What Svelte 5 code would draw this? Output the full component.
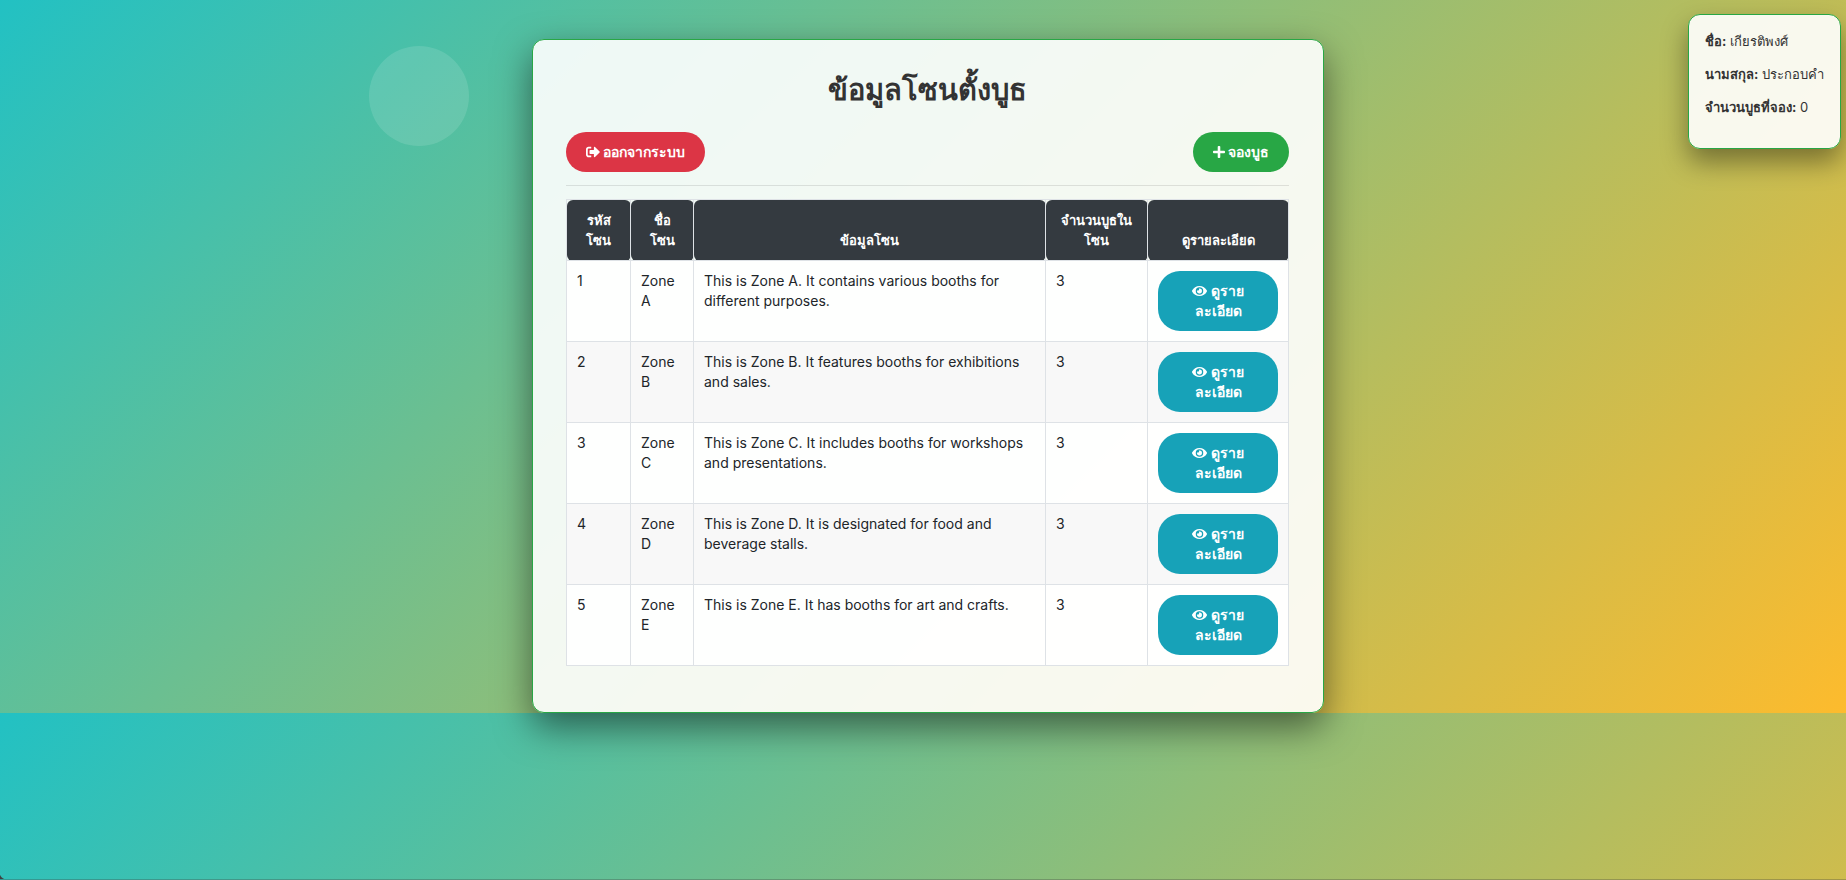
<script>
  const user = { first: 'เกียรติพงศ์', last: 'ประกอบคำ', booked: 0 };
  const zones = [
    { id: 1, name: 'Zone A', info: 'This is Zone A. It contains various booths for different purposes.', booths: 3 },
    { id: 2, name: 'Zone B', info: 'This is Zone B. It features booths for exhibitions and sales.', booths: 3 },
    { id: 3, name: 'Zone C', info: 'This is Zone C. It includes booths for workshops and presentations.', booths: 3 },
    { id: 4, name: 'Zone D', info: 'This is Zone D. It is designated for food and beverage stalls.', booths: 3 },
    { id: 5, name: 'Zone E', info: 'This is Zone E. It has booths for art and crafts.', booths: 3 }
  ];
</script>

<div class="page">
  <div class="stage">
    <div class="bubble" aria-hidden="true"></div>

    <aside class="profile">
      <p><strong>ชื่อ:</strong> {user.first}</p>
      <p><strong>นามสกุล:</strong> {user.last}</p>
      <p><strong>จำนวนบูธที่จอง:</strong> {user.booked}</p>
    </aside>

    <main class="card">
      <h1>ข้อมูลโซนตั้งบูธ</h1>
      <div class="actions">
        <button class="btn red" type="button">
          <svg viewBox="0 0 512 512" width="14" height="14" aria-hidden="true"><path d="M497 273L329 441c-15 15-41 4.500-41-17v-96H152c-13.300 0-24-10.700-24-24v-96c0-13.300 10.700-24 24-24h136V88c0-21.400 25.900-32 41-17l168 168c9.300 9.400 9.300 24.600 0 34zM192 436v-40c0-6.600-5.400-12-12-12H96c-17.700 0-32-14.300-32-32V160c0-17.700 14.300-32 32-32h84c6.600 0 12-5.400 12-12V76c0-6.600-5.400-12-12-12H96c-53 0-96 43-96 96v192c0 53 43 96 96 96h84c6.600 0 12-5.400 12-12z" /></svg>
          ออกจากระบบ</button>
        <button class="btn green" type="button">
          <svg viewBox="0 0 448 512" width="12" height="14" aria-hidden="true"><path d="M416 208H272V64c0-17.670-14.330-32-32-32h-32c-17.670 0-32 14.330-32 32v144H32c-17.670 0-32 14.330-32 32v32c0 17.670 14.330 32 32 32h144v144c0 17.670 14.330 32 32 32h32c17.670 0 32-14.330 32-32V304h144c17.670 0 32-14.330 32-32v-32c0-17.670-14.330-32-32-32z" /></svg>
          จองบูธ</button>
      </div>
      <table>
        <colgroup><col class="c1" /><col class="c2" /><col class="c3" /><col class="c4" /><col class="c5" /></colgroup>
        <thead>
          <tr>
            <th scope="col">รหัส<br />โซน</th>
            <th scope="col">ชื่อ<br />โซน</th>
            <th scope="col">ข้อมูลโซน</th>
            <th scope="col">จำนวนบูธใน<br />โซน</th>
            <th scope="col">ดูรายละเอียด</th>
          </tr>
        </thead>
        <tbody>
          {#each zones as zone}
            <tr>
              <td>{zone.id}</td>
              <td>{zone.name}</td>
              <td>{zone.info}</td>
              <td>{zone.booths}</td>
              <td>
                <button class="btn teal" type="button">
                  <svg viewBox="0 0 576 512" width="15" height="14" aria-hidden="true"><path d="M572.520 241.400C518.290 135.590 410.930 64 288 64S57.680 135.640 3.480 241.410a32.350 32.350 0 0 0 0 29.190C57.710 376.410 165.070 448 288 448s230.320-71.640 284.520-177.410a32.350 32.350 0 0 0 0-29.190zM288 400a144 144 0 1 1 144-144 143.930 143.930 0 0 1-144 144zm0-240a95.310 95.310 0 0 0-25.310 3.790 47.850 47.850 0 0 1-66.900 66.900A95.780 95.780 0 1 0 288 160z" /></svg>
                  ดูราย<br />ละเอียด</button>
              </td>
            </tr>
          {/each}
        </tbody>
      </table>
    </main>
  </div>
  <div class="corner" aria-hidden="true"></div>
</div>

<style>
  :global(body) {
    margin: 0;
    color: #333;
    font-family: Inter, "Noto Sans", sans-serif;
    font-size: 14px;
    line-height: 20px;
  }
  .page {
    position: relative;
    isolation: isolate;
    min-height: 100vh;
    overflow: hidden;
  }
  .stage {
    position: relative;
    padding: 39px 0 0 10px;
  }
  /* The gradient covers the content once and repeats below it. */
  .stage::before,
  .stage::after {
    content: '';
    position: absolute;
    z-index: -1;
    left: 0;
    top: 0;
    width: 100%;
    height: 100%;
    background: linear-gradient(135deg, #22c1c3, #fdbb2d);
  }
  .stage::after {
    top: 100%;
  }
  .bubble {
    position: absolute;
    left: 20%;
    top: 46px;
    width: 100px;
    height: 100px;
    border-radius: 50%;
    background: rgba(255, 255, 255, 0.12);
  }
  .corner {
    position: absolute;
    left: 0;
    right: 0;
    bottom: 0;
    height: 7px;
    border-bottom: 1px solid rgba(60, 60, 60, 0.3);
    background: radial-gradient(circle at 7px 0, transparent 7px, #404040 8px) 0 0 / 7px 7px no-repeat;
  }
  .profile {
    position: absolute;
    top: 14px;
    right: 5px;
    min-width: 117px;
    padding: 16px 16px 18px;
    border: 1px solid #28a745;
    border-radius: 12px;
    background: rgba(255, 255, 255, 0.9);
    box-shadow: 0 13px 27px rgba(0, 0, 0, 0.4);
    font-size: 13px;
  }
  p {
    margin: 0 0 13px;
  }
  .card {
    position: relative;
    box-sizing: border-box;
    width: 792px;
    max-width: 100%;
    margin: 0 auto;
    padding: 34px 34px 46px 33px;
    border: 1px solid #28a745;
    border-radius: 12px;
    background: rgba(255, 255, 255, 0.9);
    box-shadow: 0 14px 36px rgba(0, 0, 0, 0.5);
  }
  h1 {
    margin: 0 0 26px;
    font-size: 29px;
    line-height: 32px;
    font-weight: 700;
    text-align: center;
  }
  .actions {
    display: flex;
    justify-content: space-between;
    margin-bottom: 13px;
    padding-bottom: 13px;
    border-bottom: 1px solid rgba(0, 0, 0, 0.1);
  }
  .btn {
    padding: 10px 20px;
    border: 0;
    border-radius: 22px;
    color: #fff;
    font: inherit;
    font-weight: 700;
    cursor: pointer;
  }
  .btn svg {
    fill: currentColor;
    vertical-align: -2px;
  }
  .red { background: #dc3545; }
  .green { background: #28a745; }
  .teal {
    display: block;
    width: 100%;
    background: #17a2b8;
  }
  table {
    width: 100%;
    table-layout: fixed;
    border-collapse: collapse;
    color: #212529;
  }
  .c1 { width: 64px; }
  .c2 { width: 63px; }
  .c4 { width: 102px; }
  .c5 { width: 141px; }
  th, td {
    padding: 10px;
    border: 1px solid #dee2e6;
    vertical-align: top;
    text-align: left;
  }
  th {
    border-radius: 6px;
    background: #343a40;
    color: #fff;
    font-size: 13px;
    vertical-align: bottom;
    text-align: center;
    white-space: nowrap;
  }
  tbody tr { background: rgba(255, 255, 255, 0.9); }
  tbody tr:nth-child(even) { background: #f8f8f8; }
</style>
